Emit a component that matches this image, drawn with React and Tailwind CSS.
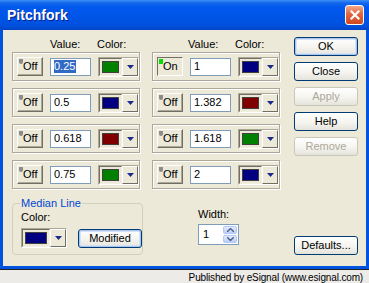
import React from "react";

const swatch = {
  green: "bg-[#008000]",
  navy: "bg-[#000080]",
  maroon: "bg-[#800000]",
};

const leftRows = [
  { value: "0.25", color: "green", selected: true },
  { value: "0.5", color: "navy" },
  { value: "0.618", color: "maroon" },
  { value: "0.75", color: "green" },
];

const rightRows = [
  { value: "1", color: "navy", on: true },
  { value: "1.382", color: "maroon" },
  { value: "1.618", color: "green" },
  { value: "2", color: "navy" },
];

const Arrow = () => (
  <svg width="7" height="4" viewBox="0 0 7 4">
    <path d="M0 0h7L3.5 4z" fill="#1C2A8C" />
  </svg>
);

const Toggle = ({ on }) => (
  <div
    className={`relative w-[26px] h-[19px] flex items-center pl-[5px] bg-[#ECE9D8] border ${
      on
        ? "border-t-[#716F64] border-l-[#716F64] border-r-white border-b-white"
        : "border-t-white border-l-white border-r-[#716F64] border-b-[#716F64] shadow-[inset_-1px_-1px_0_#ACA899]"
    }`}
  >
    <span
      className={`absolute left-[1px] top-[1px] w-[4px] h-[5px] ${
        on ? "bg-[#00E000]" : "bg-[#8C8C8C] rounded-b-[2px]"
      }`}
    />
    <span>{on ? "On" : "Off"}</span>
  </div>
);

const ColorBox = ({ color, wide }) => (
  <div
    className={`flex h-[20px] ${wide ? "w-[46px]" : "w-[41px]"} border border-t-[#ACA899] border-l-[#ACA899] border-r-white border-b-white`}
  >
    <div className="flex-1 flex items-center justify-center bg-[#ECE9D8] border border-t-[#716F64] border-l-[#716F64] border-r-[#F1EFE2] border-b-[#F1EFE2]">
      <div className={`${wide ? "w-[22px]" : "w-[17px]"} h-[12px] border border-[#404040] ${swatch[color]}`} />
    </div>
    <div className="w-[16px] flex items-center justify-center bg-[#ECE9D8] border border-t-white border-l-white border-r-[#716F64] border-b-[#716F64]">
      <Arrow />
    </div>
  </div>
);

const Row = ({ row }) => (
  <div className="h-[29px] w-[128px] flex items-center pl-[4px] gap-[7px] border border-[#ACA899] shadow-[inset_1px_1px_0_#fff,1px_1px_0_#fff]">
    <Toggle on={row.on} />
    <div className="w-[41px] h-[18px] bg-white border border-[#7F9DB9] flex items-center pl-[3px]">
      {row.selected ? (
        <span className="bg-[#316AC5] text-white pr-[1px]">{row.value}</span>
      ) : (
        <span>{row.value}</span>
      )}
    </div>
    <ColorBox color={row.color} />
  </div>
);

const Btn = ({ children, disabled, focus, cls = "" }) => (
  <div
    className={`h-[19px] w-[64px] flex items-center justify-center rounded-[3px] border bg-[linear-gradient(to_bottom,#FFFFFF,#F5F4EF_55%,#E4E3DB)] ${
      disabled ? "border-[#C9C7BA] text-[#ACA899] bg-[#F5F4EA]" : "border-[#003C74] text-black"
    } ${focus ? "shadow-[inset_0_0_0_1px_#A8C3EE,inset_0_0_0_2px_#D5E2F7]" : ""} ${cls}`}
  >
    {children}
  </div>
);

const Column = ({ rows, headerPad }) => (
  <div className="flex flex-col w-[128px]">
    <div className={`h-[16px] flex items-center ${headerPad} text-black`}>
      <span className="w-[47px]">Value:</span>
      <span>Color:</span>
    </div>
    <div className="flex flex-col gap-[7px]">
      {rows.map((r, i) => (
        <Row key={i} row={r} />
      ))}
    </div>
  </div>
);

export default function App() {
  return (
    <div className="w-[369px] h-[283px] flex flex-col bg-[#ECE9D8] text-[11px] leading-[13px] text-black font-['Liberation_Sans',Arial,sans-serif] overflow-hidden">
      <div className="h-[30px] shrink-0 flex items-center justify-between pl-[7px] pr-[5px] bg-[linear-gradient(to_bottom,#3C8EF3_0%,#1467EC_10%,#0058EE_25%,#0055E6_60%,#0050DC_88%,#0043C4_100%)]">
        <span className="text-white font-bold text-[14px] [text-shadow:1px_1px_0_#0A1E8C]">
          Pitchfork
        </span>
        <div className="w-[19px] h-[20px] rounded-[3px] border border-white flex items-center justify-center bg-[linear-gradient(to_bottom,#F0A88C,#E2653F_45%,#D0481F)]">
          <svg width="10" height="10" viewBox="0 0 10 10">
            <path d="M1.5 1.5l7 7M8.5 1.5l-7 7" stroke="#fff" strokeWidth="2.2" strokeLinecap="square" />
          </svg>
        </div>
      </div>

      <div className="flex-1 flex border-x-[3px] border-b-[3px] border-[#0053E1] pl-[9px] pt-[6px] pb-[11px]">
        <div className="flex flex-col">
          <div className="flex gap-[12px]">
            <Column rows={leftRows} headerPad="pl-[38px]" />
            <Column rows={rightRows} headerPad="pl-[36px]" />
          </div>
          <div className="flex gap-[12px] mt-[8px]">
            <fieldset className="w-[129px] h-[58px] border border-[#D0D0BF] rounded-[4px] pl-[8px] pt-[1px] m-0">
              <legend className="px-[1px] -ml-[1px] text-[#0046D5]">Median Line</legend>
              <div>Color:</div>
              <div className="flex items-center gap-[11px] mt-[4px]">
                <ColorBox color="navy" wide />
                <Btn focus cls="w-[54px] h-[18px]">Modified</Btn>
              </div>
            </fieldset>
            <div className="flex flex-col pl-[43px] pt-[11px]">
              <span>Width:</span>
              <div className="mt-[3px] w-[41px] h-[21px] bg-white border border-[#7F9DB9] flex items-center justify-between pl-[4px] pr-[1px]">
                <span>1</span>
                <div className="flex flex-col w-[14px] h-[17px] gap-[1px]">
                  <div className="flex-1 rounded-[2px] bg-[linear-gradient(to_bottom,#E3ECFD,#B9CDF6)] border border-[#B4C8F6] flex items-center justify-center">
                    <svg width="7" height="4" viewBox="0 0 7 4"><path d="M0 4L3.5 0.5 7 4" fill="none" stroke="#4D6185" strokeWidth="1.4" /></svg>
                  </div>
                  <div className="flex-1 rounded-[2px] bg-[linear-gradient(to_bottom,#E3ECFD,#B9CDF6)] border border-[#B4C8F6] flex items-center justify-center">
                    <svg width="7" height="4" viewBox="0 0 7 4"><path d="M0 0L3.5 3.5 7 0" fill="none" stroke="#4D6185" strokeWidth="1.4" /></svg>
                  </div>
                </div>
              </div>
            </div>
          </div>
        </div>
        <div className="flex flex-col ml-[14px] pt-[1px]">
          <div className="flex flex-col gap-[6px]">
            <Btn focus>OK</Btn>
            <Btn>Close</Btn>
            <Btn disabled>Apply</Btn>
            <Btn>Help</Btn>
            <Btn disabled>Remove</Btn>
          </div>
          <Btn cls="mt-auto">Defaults...</Btn>
        </div>
      </div>

      <div className="h-[15px] shrink-0 border-t border-[#222] bg-[#ECEBE8] flex items-center justify-end pr-[6px]">
        <span className="text-[10px] tracking-[-0.15px]">Published by eSignal (www.esignal.com)</span>
      </div>
    </div>
  );
}
